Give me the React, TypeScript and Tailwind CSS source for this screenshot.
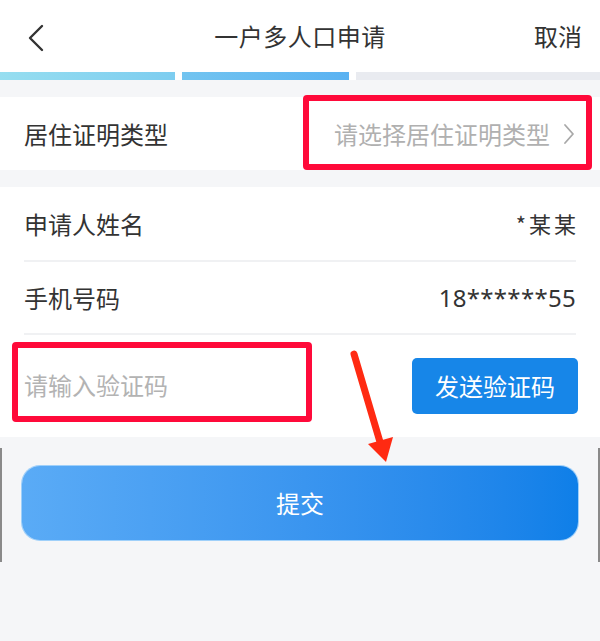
import React from "react";

const font = { fontFamily: '"Noto Sans CJK SC", "Noto Sans", sans-serif' };

function ChevronLeft() {
  return (
    <svg width="18" height="28" viewBox="0 0 18 28" fill="none">
      <path d="M15 2 L3 14 L15 26" stroke="#333" strokeWidth="2.4" strokeLinecap="round" strokeLinejoin="round" />
    </svg>
  );
}

function ChevronRight() {
  return (
    <svg width="12" height="22" viewBox="0 0 12 22" fill="none">
      <path d="M2 2 L10 11 L2 20" stroke="#a8a8a8" strokeWidth="1.8" strokeLinecap="round" strokeLinejoin="round" />
    </svg>
  );
}

export default function App() {
  return (
    <div className="relative w-[600px] h-[641px] bg-[#f5f6f8] overflow-hidden text-[#333]" style={font}>
      {/* header */}
      <div className="relative h-[72px] bg-white flex items-center justify-center">
        <div className="absolute left-[27px] top-[24px]">
          <ChevronLeft />
        </div>
        <span className="text-[24px] leading-none tracking-[0.5px]">一户多人口申请</span>
        <span className="absolute right-[18px] top-[24px] text-[24px] leading-none">取消</span>
      </div>

      {/* step progress */}
      <div className="flex h-[8px] gap-[7px] bg-white">
        <div className="w-[175px] h-full bg-gradient-to-r from-[#96def0] to-[#7dcdf0]" />
        <div className="w-[167px] h-full bg-gradient-to-r from-[#72c4f0] to-[#5ab2f2]" />
        <div className="flex-1 h-full bg-[#e9ebf0]" />
      </div>

      {/* residence proof type */}
      <div className="mt-[17px] h-[73px] bg-white flex items-center justify-between pl-[24px] pr-[25px]">
        <span className="text-[24px]">居住证明类型</span>
        <div className="flex items-center gap-[13px]">
          <span className="text-[24px] text-[#b0b0b0]">请选择居住证明类型</span>
          <ChevronRight />
        </div>
      </div>

      {/* applicant info */}
      <div className="mt-[17px] bg-white">
        <div className="mx-[24px] h-[75px] flex items-center justify-between border-b-2 border-[#f0f1f3]">
          <span className="text-[24px]">申请人姓名</span>
          <span className="text-[22px] tracking-[3px] mr-[-3px]">*某某</span>
        </div>
        <div className="mx-[24px] h-[73px] flex items-center justify-between border-b-2 border-[#f0f1f3]">
          <span className="text-[24px]">手机号码</span>
          <span className="text-[24px] tracking-[0.3px]" style={{ fontFamily: '"Noto Sans", sans-serif' }}>
            18******55
          </span>
        </div>
        <div className="h-[102px] flex items-center justify-between pl-[24px] pr-[22px]">
          <span className="text-[24px] text-[#b3b3b3] mt-[-2px]">请输入验证码</span>
          <button className="w-[166px] h-[56px] rounded-[5px] bg-[#1786e8] text-white text-[24px]">
            发送验证码
          </button>
        </div>
      </div>

      {/* submit */}
      <div className="mt-[11px] border-x-2 border-[#8a8a8a] pt-[18px] pb-[22px] px-[20px]">
        <button className="w-full h-[74px] rounded-[18px] bg-gradient-to-r from-[#5aabf6] to-[#0e7fe8] text-white text-[24px] shadow-[0_0_0_1px_#9fd0fa]">
          提交
        </button>
      </div>

      {/* annotation frames */}
      <div className="absolute left-[303px] top-[95px] w-[289px] h-[75px] border-[6px] border-[#ff0a3a] rounded-[4px]" />
      <div className="absolute left-[12px] top-[342px] w-[300px] h-[80px] border-[6px] border-[#ff0a3a] rounded-[4px]" />

      {/* annotation arrow */}
      <svg className="absolute left-0 top-0" width="600" height="641" viewBox="0 0 600 641">
        <line x1="354" y1="354" x2="380" y2="442" stroke="#ff2a12" strokeWidth="7" strokeLinecap="round" />
        <polygon points="368,444 393,437 386,462" fill="#ff2a12" />
      </svg>
    </div>
  );
}
